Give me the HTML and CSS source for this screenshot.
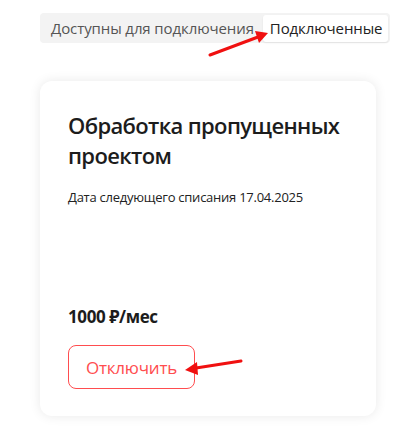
FILE: index.html
```html
<!DOCTYPE html>
<html>
<head>
  <meta charset="utf-8">
  <title>Подключенные</title>
  <link rel="stylesheet" href="styles.css">
</head>
<body>
  <div class="page">
    <div class="tabs">
      <span class="tab">Доступны для подключения</span>
      <span class="tab tab-active">Подключенные</span>
    </div>

    <div class="card">
      <h2 class="card-title">Обработка пропущенных проектом</h2>
      <p class="card-date">Дата следующего списания 17.04.2025</p>
      <div class="card-bottom">
        <div class="card-price">1000 ₽/мес</div>
        <button class="btn-off">Отключить</button>
      </div>
    </div>

    <!-- стрелки-пометки поверх скриншота -->
    <svg class="arrows" width="399" height="430" viewBox="0 0 399 430">
      <line x1="210" y1="55" x2="258" y2="37" stroke="#f01010" stroke-width="3" stroke-linecap="round"/>
      <polygon points="268,33 255,31 259,43" fill="#f01010"/>
      <line x1="241" y1="361" x2="196" y2="368" stroke="#f01010" stroke-width="3" stroke-linecap="round"/>
      <polygon points="185,370 197,362 198,375" fill="#f01010"/>
    </svg>
  </div>
</body>
</html>
```

FILE: styles.css
```css
body {
  margin: 0;
  font-family: "Open Sans", "Noto Sans", sans-serif;
  background-color: #fff;
  color: #1a1a1a;
}

.page {
  position: relative;
  padding: 13px 0 0 40px;
  height: 430px;
  box-sizing: border-box;
}

.tabs {
  display: inline-flex;
  align-items: center;
  background-color: #f3f3f3;
  border-radius: 4px;
  padding: 1px 2px;
  height: 30px;
  box-sizing: border-box;
}

.tab {
  font-size: 15px;
  color: #555;
  padding: 0 9px;
  line-height: 27px;
  letter-spacing: -0.1px;
}

.tab-active {
  background-color: #fff;
  color: #222;
  border-radius: 3px;
  box-shadow: 0 1px 2px rgba(0, 0, 0, 0.08);
  padding: 0 6px 0 7px;
}

.card {
  margin-top: 38px;
  width: 336px;
  height: 335px;
  box-sizing: border-box;
  padding: 29px 28px 27px 28px;
  background-color: #fff;
  border-radius: 12px;
  box-shadow: 0 0 12px rgba(0, 0, 0, 0.09);
  display: flex;
  flex-direction: column;
}

.card-title {
  margin: 0;
  font-size: 22px;
  font-weight: 600;
  line-height: 30px;
  letter-spacing: -0.65px;
  color: #1c1c1c;
}

.card-date {
  margin: 19px 0 0 0;
  font-size: 13px;
  line-height: 16px;
  color: #222;
  letter-spacing: -0.25px;
}

.card-bottom {
  margin-top: auto;
}

.card-price {
  font-size: 17px;
  font-weight: 700;
  line-height: 20px;
  letter-spacing: -0.4px;
  color: #1c1c1c;
}

.btn-off {
  margin-top: 18px;
  width: 127px;
  height: 44px;
  background-color: #fff;
  border: 1px solid #ff4d4f;
  border-radius: 8px;
  color: #ff4d4f;
  font-family: "Open Sans", "Noto Sans", sans-serif;
  font-size: 17px;
  letter-spacing: -0.2px;
  cursor: pointer;
}

.arrows {
  position: absolute;
  left: 0;
  top: 0;
  pointer-events: none;
}
```
